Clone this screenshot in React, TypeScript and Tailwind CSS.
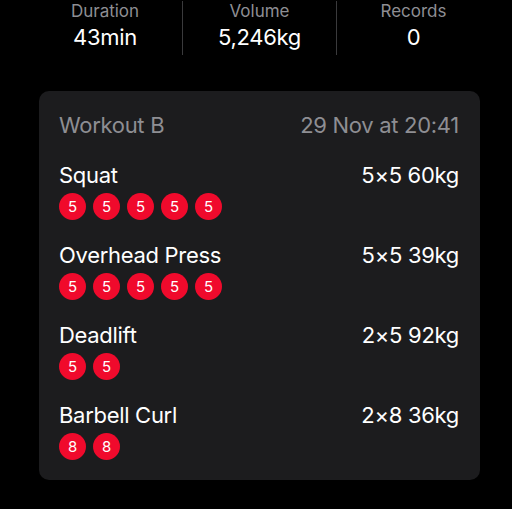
const stats = [
  { label: "Duration", value: "43min" },
  { label: "Volume", value: "5,246kg" },
  { label: "Records", value: "0" },
];

const exercises = [
  { name: "Squat", summary: "5×5 60kg", reps: [5, 5, 5, 5, 5] },
  { name: "Overhead Press", summary: "5×5 39kg", reps: [5, 5, 5, 5, 5] },
  { name: "Deadlift", summary: "2×5 92kg", reps: [5, 5] },
  { name: "Barbell Curl", summary: "2×8 36kg", reps: [8, 8] },
];

function RepBadge({ reps }: { reps: number }) {
  return (
    <div className="flex h-[27px] w-[27px] items-center justify-center rounded-full bg-[#f00a2c] text-[15px] leading-none text-white">
      {reps}
    </div>
  );
}

export default function App() {
  return (
    <div
      className="h-[509px] w-full overflow-hidden bg-black text-white"
      style={{ fontFamily: "Inter, 'Noto Sans', sans-serif" }}
    >
      <div className="ml-[28px] grid w-[462px] grid-cols-3 pt-[1px]">
        {stats.map((s, i) => (
          <div
            key={s.label}
            className={`flex flex-col items-center gap-[3px] pb-[5px] ${
              i > 0 ? "border-l border-[#3a3a3c]" : ""
            }`}
          >
            <span className="text-[17px] leading-[20px] text-[#8e8e93]">{s.label}</span>
            <span className="text-[22px] leading-[26px] tracking-[-0.3px]">{s.value}</span>
          </div>
        ))}
      </div>

      <div className="ml-[39px] mt-[36px] w-[441px] rounded-[10px] bg-[#1c1c1e] pb-[20px] pl-[20px] pr-[21px] pt-[20px] tracking-[-0.3px]">
        <div className="flex items-center justify-between text-[22px] leading-[28px] text-[#8e8e93]">
          <span>Workout B</span>
          <span>29 Nov at 20:41</span>
        </div>
        <div className="mt-[22px] flex flex-col gap-[21px]">
          {exercises.map((ex) => (
            <div key={ex.name} className="flex flex-col">
              <div className="flex items-center justify-between text-[22px] leading-[28px]">
                <span>{ex.name}</span>
                <span>{ex.summary}</span>
              </div>
              <div className="mt-[4px] flex gap-[7px]">
                {ex.reps.map((r, j) => (
                  <RepBadge key={j} reps={r} />
                ))}
              </div>
            </div>
          ))}
        </div>
      </div>
    </div>
  );
}
